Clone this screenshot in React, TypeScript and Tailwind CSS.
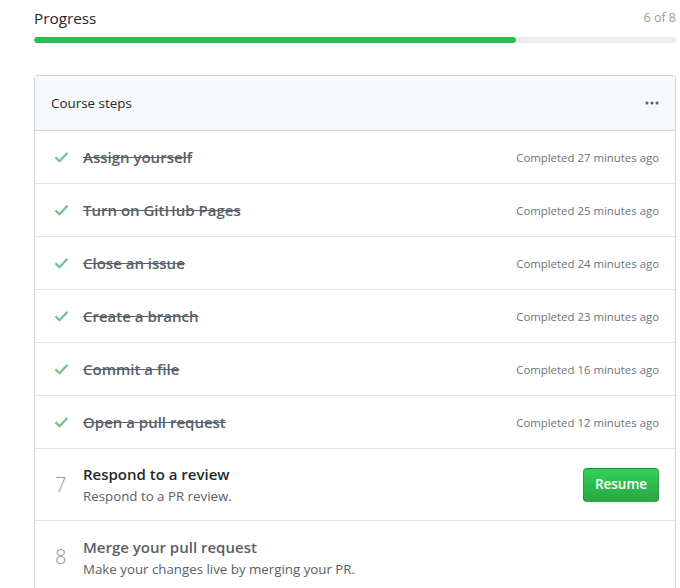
import React from "react";

const done = [
  { t: "Assign yourself", m: 27 },
  { t: "Turn on GitHub Pages", m: 25 },
  { t: "Close an issue", m: 24 },
  { t: "Create a branch", m: 23 },
  { t: "Commit a file", m: 16 },
  { t: "Open a pull request", m: 12 },
];

function Check() {
  return (
    <svg width="15" height="12" viewBox="0 0 15 12" className="shrink-0">
      <path d="M1.5 6.2l4 4L13.5 1.8" fill="none" stroke="#6cc486" strokeWidth="2.2" />
    </svg>
  );
}

export default function App() {
  return (
    <div className="w-[680px] h-[588px] overflow-hidden bg-white pl-[34px] pr-[4px] pt-[6px]" style={{ fontFamily: '"Open Sans", "Noto Sans", sans-serif' }}>
      <div className="flex items-center justify-between h-[24px]">
        <span className="text-[15.3px] text-[#24292e]">Progress</span>
        <span className="text-[12.5px] text-[#959da5]">6 of 8</span>
      </div>
      <div className="mt-[7px] h-[6px] w-full rounded-full bg-[#eaecef] overflow-hidden">
        <div className="h-full bg-[#2cbe4e] rounded-full" style={{ width: "75%" }} />
      </div>
      <div className="mt-[32px] border border-[#d1d5da] rounded-t-[3px]">
        <div className="h-[55px] bg-[#f6f8fa] border-b border-[#d1d5da] flex items-center justify-between px-[16px]">
          <span className="text-[13.4px] text-[#24292e]">Course steps</span>
          <svg width="14" height="4" viewBox="0 0 14 4">
            <circle cx="2" cy="2" r="1.5" fill="#586069" />
            <circle cx="7" cy="2" r="1.5" fill="#586069" />
            <circle cx="12" cy="2" r="1.5" fill="#586069" />
          </svg>
        </div>
        {done.map((d) => (
          <div key={d.t} className="h-[53px] border-b border-[#e1e4e8] flex items-center pl-[19px] pr-[16px]">
            <Check />
            <span className="ml-[14px] text-[15px] font-semibold text-[#586069] line-through decoration-[#586069] leading-[20px]">{d.t}</span>
            <span className="ml-auto text-[11.4px] text-[#6a737d] pt-[1px]">Completed {d.m} minutes ago</span>
          </div>
        ))}
        <div className="h-[72px] border-b border-[#e1e4e8] flex items-center pl-[20px] pr-[16px]">
          <span className="w-[28px] text-[20px] text-[#959da5] font-light">7</span>
          <div className="flex flex-col">
            <span className="text-[15px] font-semibold text-[#24292e] leading-[22px]">Respond to a review</span>
            <span className="text-[13.3px] text-[#586069] leading-[20px] pt-[1px]">Respond to a PR review.</span>
          </div>
          <button className="ml-auto w-[76px] h-[34px] rounded-[4px] border border-[rgba(27,31,35,0.2)] bg-gradient-to-b from-[#34d058] to-[#28a745] text-white text-[13.5px] font-semibold">
            Resume
          </button>
        </div>
        <div className="h-[72px] flex items-center pl-[20px] pr-[16px]">
          <span className="w-[28px] text-[20px] text-[#959da5] font-light">8</span>
          <div className="flex flex-col">
            <span className="text-[15px] text-[#586069] leading-[22px] font-semibold">Merge your pull request</span>
            <span className="text-[13.3px] text-[#586069] leading-[20px] pt-[1px]">Make your changes live by merging your PR.</span>
          </div>
        </div>
      </div>
    </div>
  );
}
